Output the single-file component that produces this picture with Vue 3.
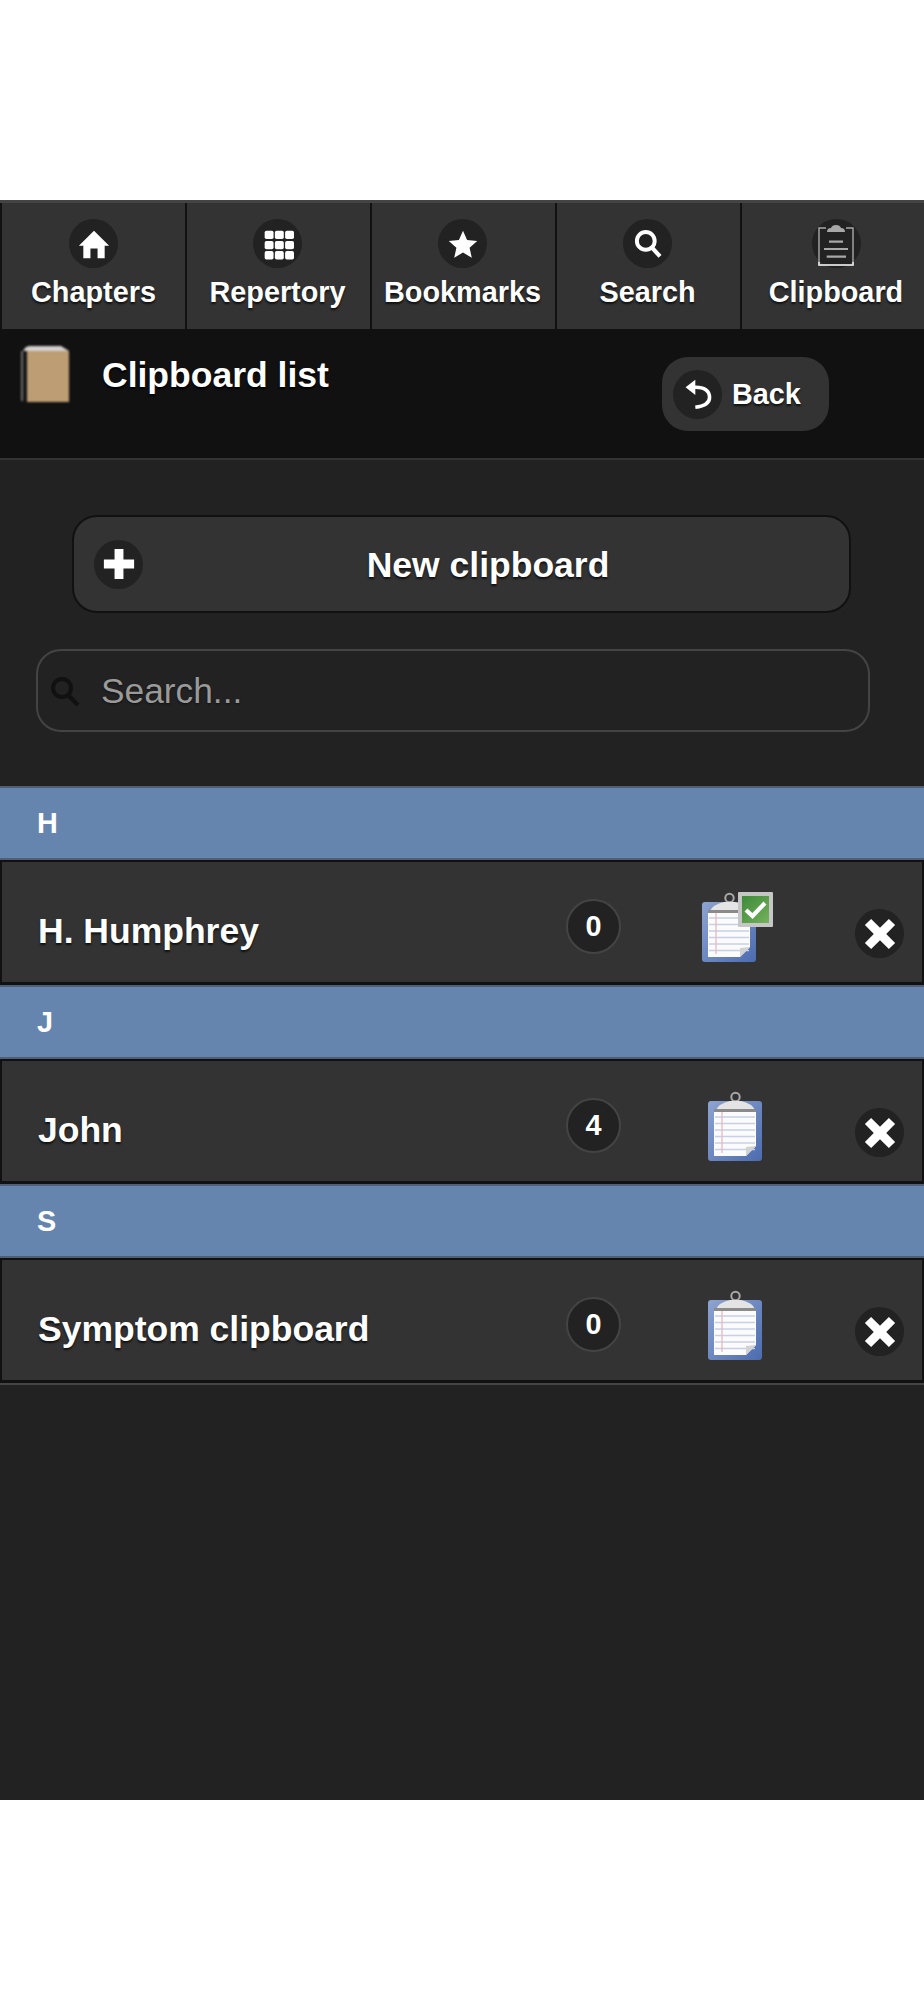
<script setup>
const navItems = [
  { label: 'Chapters', icon: 'home' },
  { label: 'Repertory', icon: 'grid' },
  { label: 'Bookmarks', icon: 'star' },
  { label: 'Search', icon: 'search' },
  { label: 'Clipboard', icon: 'clip' }
]
const sections = [
  { letter: 'H', name: 'H. Humphrey', count: 0, checked: true },
  { letter: 'J', name: 'John', count: 4, checked: false },
  { letter: 'S', name: 'Symptom clipboard', count: 0, checked: false }
]
const gridDots = [0, 1, 2, 3, 4, 5, 6, 7, 8].map(i => ({ x: 3 + (i % 3) * 11.5, y: 3 + Math.floor(i / 3) * 11.5 }))
const lineYs = [26, 32.5, 39, 45.5, 52, 58.5]
</script>

<template>
  <div class="page">
    <div class="app">
      <nav class="nav">
        <a v-for="item in navItems" :key="item.label" class="nav-item">
          <span class="disc">
            <svg v-if="item.icon === 'home'" class="glyph" viewBox="0 0 36 36">
              <path d="M18 3 L35 20 L30 20 L30 34 L22 34 L22 23 L14 23 L14 34 L6 34 L6 20 L1 20 Z" fill="#fff" />
            </svg>
            <svg v-else-if="item.icon === 'grid'" class="glyph" viewBox="0 0 36 36">
              <rect v-for="(d, i) in gridDots" :key="i" :x="d.x" :y="d.y" width="10" height="9.5" rx="2" fill="#fff" />
            </svg>
            <svg v-else-if="item.icon === 'star'" class="glyph" viewBox="0 0 36 36">
              <path d="M18 3 L22.6 13.6 L34 14.7 L25.4 22.3 L27.9 33.5 L18 27.6 L8.1 33.5 L10.6 22.3 L2 14.7 L13.4 13.6 Z" fill="#fff" />
            </svg>
            <svg v-else-if="item.icon === 'search'" class="glyph" viewBox="0 0 36 36">
              <circle cx="15.5" cy="14.5" r="10" fill="none" stroke="#fff" stroke-width="4.4" />
              <path d="M22.5 22 L31.5 32" stroke="#fff" stroke-width="4.6" fill="none" />
            </svg>
            <svg v-else class="glyph-clip" viewBox="0 0 36 44">
              <path d="M8 6 H1 V43 H35 V6 H28" fill="none" stroke="#a8a8a8" stroke-width="1.4" />
              <path d="M1 40 V43 H35 V40" fill="none" stroke="#e2e2e2" stroke-width="1.6" />
              <path d="M9 10 Q9 6 13 6 Q14 3 18 3 Q22 3 23 6 Q27 6 27 10 Z" fill="#a8a8a8" />
              <path d="M11 19.7 H25 M6 27 H30 M8.7 34.7 H28" stroke="#a8a8a8" stroke-width="2.2" fill="none" />
            </svg>
          </span>
          <span class="nav-label">{{ item.label }}</span>
        </a>
      </nav>

      <header class="header">
        <svg class="book" viewBox="0 0 52 60">
          <path d="M4 8 Q5 3 10 2 H42 L50 7 V8 H4 Z" fill="#d3d1cf" />
          <rect x="2" y="7" width="7" height="50" fill="#141414" />
          <rect x="2" y="7" width="2" height="50" fill="#6f6f6f" />
          <path d="M8 7 H50 V58 H8 Z" fill="#bd9d74" />
        </svg>
        <h1 class="title">Clipboard list</h1>
        <a class="back">
          <span class="disc">
            <svg class="glyph" viewBox="0 0 36 36">
              <path d="M4 10.5 L15 2 L15 19 Z" fill="#fff" />
              <path d="M14 10.5 Q31 10 31 22 Q31 31 15 33" fill="none" stroke="#fff" stroke-width="4" />
            </svg>
          </span>
          <span>Back</span>
        </a>
      </header>

      <main class="content">
        <div class="actions">
          <a class="new-btn">
            <span class="disc">
              <svg class="glyph" viewBox="0 0 36 36">
                <path d="M13 1 H23 V13 H35 V23 H23 V35 H13 V23 H1 V13 H13 Z" fill="#fff" />
              </svg>
            </span>
            <span class="new-label">New clipboard</span>
          </a>
          <label class="search">
            <svg class="search-icon" viewBox="0 0 30 30">
              <circle cx="12" cy="12" r="9" fill="none" stroke="#111" stroke-width="4" />
              <path d="M18 19 L28 29" stroke="#111" stroke-width="4.4" fill="none" />
            </svg>
            <input class="search-input" type="text" placeholder="Search..." />
          </label>
        </div>

        <ul class="list">
          <template v-for="s in sections" :key="s.letter">
            <li class="divider">{{ s.letter }}</li>
            <li class="row">
              <span class="name">{{ s.name }}</span>
              <span class="count">{{ s.count }}</span>
              <svg class="sheet" viewBox="0 0 72 70">
                <defs>
                  <linearGradient id="board" x1="0" y1="0" x2="1" y2="1">
                    <stop offset="0" stop-color="#8ea4d0" />
                    <stop offset="1" stop-color="#4c6cb0" />
                  </linearGradient>
                  <linearGradient id="tick" x1="0" y1="0" x2="1" y2="1">
                    <stop offset="0" stop-color="#3d8a3a" />
                    <stop offset="1" stop-color="#74b25a" />
                  </linearGradient>
                </defs>
                <g :transform="s.checked ? '' : 'translate(6 0)'">
                  <rect x="0" y="10" width="54" height="60" rx="3" fill="url(#board)" />
                  <path d="M6 20 H48 V55 L38 65 H6 Z" fill="#fbfbfb" />
                  <path v-for="y in lineYs" :key="y" :d="`M7 ${y} H47`" stroke="#c6d0e8" stroke-width="1.3" />
                  <path d="M14 21 V62" stroke="#e8b8bf" stroke-width="1.3" />
                  <path d="M48 55 L38 65 V56 Z" fill="#d2d2d2" />
                  <circle cx="27.5" cy="6" r="4.2" fill="none" stroke="#a9a9a9" stroke-width="2" />
                  <path d="M8 19 Q11 12.5 22 10 H33 Q44 12.5 47 19 Z" fill="#e4e4e4" />
                  <rect x="6" y="18" width="42" height="3" fill="#8a8a8a" />
                </g>
                <g v-if="s.checked">
                  <rect x="36" y="0" width="35" height="35" rx="1" fill="#c6c6c6" />
                  <rect x="40" y="4" width="27" height="27" fill="url(#tick)" />
                  <path d="M44 18 L50.5 24 L63 11" fill="none" stroke="#fff" stroke-width="4.2" />
                </g>
              </svg>
              <span class="disc remove">
                <svg class="glyph" viewBox="0 0 36 36">
                  <path d="M8 1 L18 11 L28 1 L35 8 L25 18 L35 28 L28 35 L18 25 L8 35 L1 28 L11 18 L1 8 Z" fill="#fff" />
                </svg>
              </span>
            </li>
          </template>
        </ul>
      </main>
    </div>
  </div>
</template>

<style>
html, body { background: #fff; }
</style>

<style scoped>
.page {
  padding-top: 200px;
  height: 2000px;
  box-sizing: border-box;
  font-family: "Liberation Sans", Arial, sans-serif;
  overflow: hidden;
}
.app {
  width: 924px;
  height: 1600px;
  background: #222;
  color: #fff;
  overflow: hidden;
}
.nav {
  display: flex;
  height: 129px;
  box-sizing: border-box;
  background: #333;
  border-top: 3px solid #444;
  overflow: hidden;
}
.nav-item {
  flex: 0 0 185px;
  box-sizing: border-box;
  border-left: 2px solid #111;
  padding: 16px 2px 0 0;
  display: flex;
  flex-direction: column;
  align-items: center;
  gap: 6px;
}
.nav-item:first-child { padding-right: 0; }
.nav-item:last-child { flex-basis: 192px; }
.disc {
  width: 49px;
  height: 49px;
  border-radius: 50%;
  background: #222;
  display: flex;
  align-items: center;
  justify-content: center;
  flex: none;
}
.glyph { width: 32px; height: 32px; display: block; }
.glyph-clip { width: 36px; height: 44px; display: block; filter: blur(0.4px); }
.nav-label {
  font-size: 28.8px;
  line-height: 36px;
  font-weight: 700;
  text-shadow: 0 2px 2px #111;
}
.header {
  height: 131px;
  box-sizing: border-box;
  background: #111;
  border-bottom: 2px solid #333;
  display: flex;
  align-items: flex-start;
}
.book {
  width: 52px;
  height: 60px;
  margin: 15px 0 0 19px;
  filter: blur(1px);
}
.title {
  flex: 1;
  margin: 24px 0 0 31px;
  font-size: 35.5px;
  line-height: 44px;
  font-weight: 700;
  text-shadow: 0 2px 2px #000;
}
.back {
  width: 167px;
  height: 74px;
  margin: 28px 95px 0 0;
  box-sizing: border-box;
  padding-left: 11px;
  border-radius: 26px;
  background: #333;
  display: flex;
  align-items: center;
  gap: 10px;
  font-size: 28.8px;
  font-weight: 700;
  text-shadow: 0 2px 2px #111;
}
.content { display: block; }
.actions {
  padding: 55px 54px 54px 36px;
  display: flex;
  flex-direction: column;
  gap: 36px;
}
.new-btn {
  margin: 0 19px 0 36px;
  height: 98px;
  box-sizing: border-box;
  border: 2px solid #111;
  border-radius: 25px;
  background: #333;
  display: flex;
  align-items: center;
  padding-left: 20px;
}
.new-label {
  flex: 1;
  text-align: center;
  padding: 2px 16px 0 0;
  font-size: 35.5px;
  font-weight: 700;
  text-shadow: 0 2px 2px #111;
}
.search {
  height: 83px;
  box-sizing: border-box;
  border: 2px solid #444;
  border-radius: 25px;
  display: flex;
  align-items: center;
  padding-left: 12px;
  gap: 21px;
}
.search-icon { width: 30px; height: 30px; flex: none; }
.search-input {
  flex: 1;
  min-width: 0;
  border: 0;
  outline: 0;
  padding: 0;
  background: transparent;
  color: #fff;
  font: 400 35.3px "Liberation Sans", Arial, sans-serif;
  text-shadow: 0 1px 2px #111;
}
.search-input::placeholder { color: #9a9a9a; opacity: 1; }
.list { list-style: none; margin: 0; padding: 0; border-bottom: 2px solid #444; }
.divider {
  height: 74px;
  box-sizing: border-box;
  background: #6685ae;
  border-top: 2px solid #4f5f78;
  border-bottom: 2px solid #4f5f78;
  padding-left: 37px;
  font-size: 28.8px;
  line-height: 70px;
  font-weight: 700;
}
.row {
  height: 125px;
  box-sizing: border-box;
  background: #333;
  border: 2px solid #111;
  border-bottom-width: 3px;
  display: flex;
  align-items: flex-start;
  padding-left: 36px;
}
.name {
  flex: 1;
  margin-top: 47px;
  font-size: 35.5px;
  line-height: 44px;
  font-weight: 700;
  text-shadow: 0 2px 2px #111;
}
.count {
  width: 55px;
  height: 55px;
  box-sizing: border-box;
  margin-top: 37px;
  border: 2px solid #444;
  border-radius: 50%;
  background: #222;
  display: flex;
  align-items: center;
  justify-content: center;
  font-size: 28.8px;
  font-weight: 700;
}
.sheet {
  width: 72px;
  height: 70px;
  margin: 30px 0 0 81px;
  flex: none;
  filter: blur(0.6px);
}
.remove { margin: 47px 18px 0 81px; }
</style>
